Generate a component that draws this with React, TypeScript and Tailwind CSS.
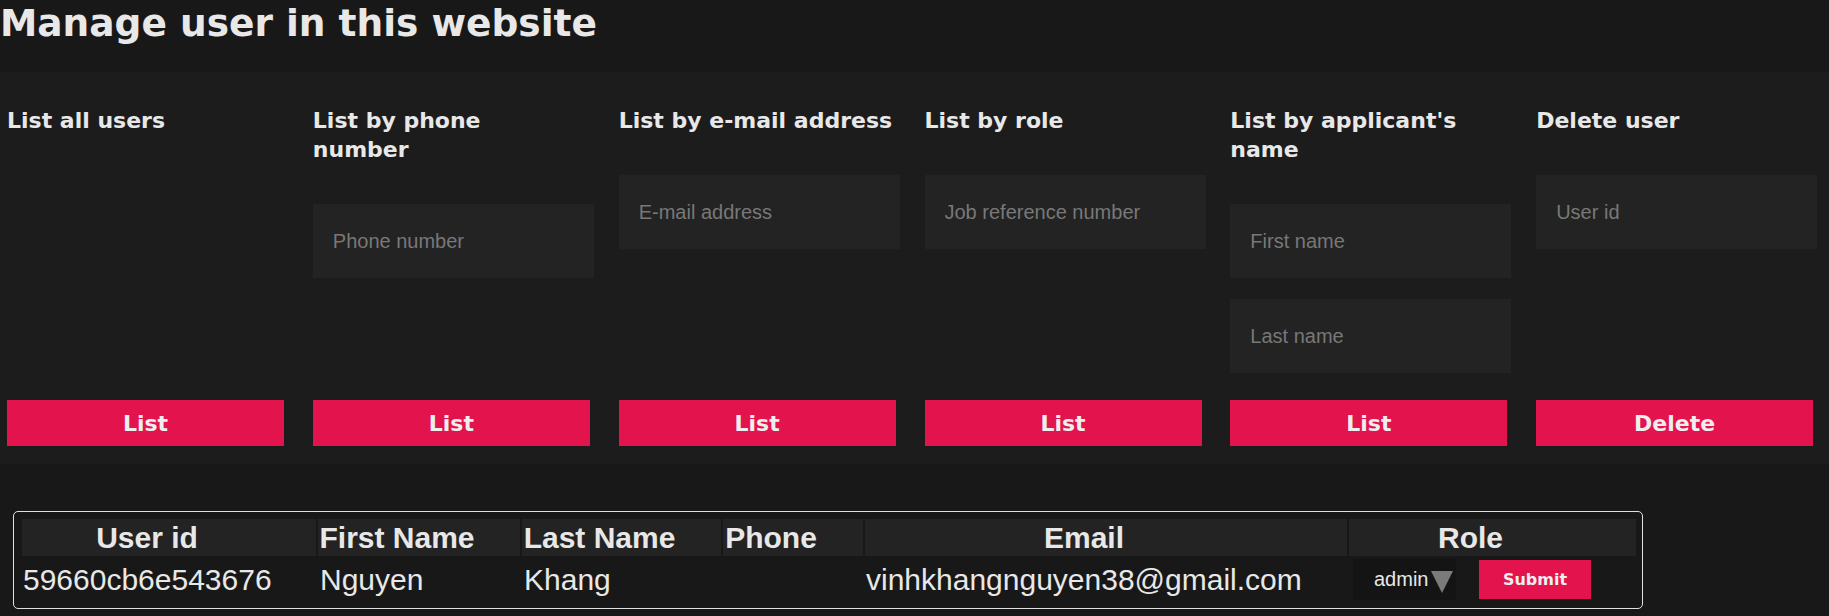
import React from 'react';

type Panel = {
  title: React.ReactNode;
  fields: string[];
  action: string;
};

const panels: Panel[] = [
  { title: 'List all users', fields: [], action: 'List' },
  { title: <>List by phone<br />number</>, fields: ['Phone number'], action: 'List' },
  { title: 'List by e-mail address', fields: ['E-mail address'], action: 'List' },
  { title: 'List by role', fields: ['Job reference number'], action: 'List' },
  { title: <>List by applicant's<br />name</>, fields: ['First name', 'Last name'], action: 'List' },
  { title: 'Delete user', fields: ['User id'], action: 'Delete' },
];

const columns = ['User id', 'First Name', 'Last Name', 'Phone', 'Email', 'Role'];

const user = {
  id: '59660cb6e543676',
  firstName: 'Nguyen',
  lastName: 'Khang',
  phone: '',
  email: 'vinhkhangnguyen38@gmail.com',
  role: 'admin',
};

function ActionPanel({ panel }: { panel: Panel }) {
  return (
    <div className="flex flex-col pl-[7px]">
      <h2 className="font-['DejaVu_Sans',sans-serif] text-[22px] font-bold leading-[29px] text-[#e8e8e8]">
        {panel.title}
      </h2>
      {panel.fields.length > 0 && (
        <div className="mt-[40px] mb-[27px] flex flex-col gap-[21px]">
          {panel.fields.map((f) => (
            <input
              key={f}
              placeholder={f}
              className="h-[74px] w-[281px] bg-[#232323] pl-[20px] font-['Liberation_Sans',Arial,sans-serif] text-[20px] text-[#e8e8e8] outline-none placeholder:text-[#787878]"
            />
          ))}
        </div>
      )}
      <button className="mt-auto h-[46px] w-[277px] bg-[#e2134d] font-['DejaVu_Sans',sans-serif] text-[22px] font-bold text-[#eeeeee]">
        {panel.action}
      </button>
    </div>
  );
}

export default function App() {
  const grid = 'grid grid-cols-[294px_202px_199px_140px_482px_287px] gap-x-[2px]';

  return (
    <div className="min-h-screen w-full overflow-hidden bg-[#181818] text-[#e8e8e8]">
      <h1 className="pt-px font-['DejaVu_Sans',sans-serif] text-[37.5px] font-bold leading-[45px] text-[#e8e8e8]">
        Manage user in this website
      </h1>

      <section className="mt-[26px] grid w-[1835px] grid-cols-6 bg-[#1c1c1c] pt-[34px] pb-[18px]">
        {panels.map((p, i) => (
          <ActionPanel key={i} panel={p} />
        ))}
      </section>

      <div className="mt-[47px] ml-[13px] w-[1630px] rounded-[5px] border border-[#e0e0e0] pt-[7px] pr-[6px] pb-[7px] pl-[8px] font-['Liberation_Sans',Arial,sans-serif]">
        <div className={grid}>
          {columns.map((c) => (
            <div key={c} className="h-[37px] bg-[#232323] pr-[44px] text-center text-[30px] font-bold leading-[37px] text-[#e8e8e8]">
              {c}
            </div>
          ))}
        </div>
        <div className={`${grid} mt-[2px] h-[43px] items-center text-[30px] leading-[34px]`}>
          <div className="px-[1px]">{user.id}</div>
          <div className="px-[2px]">{user.firstName}</div>
          <div className="px-[2px]">{user.lastName}</div>
          <div className="px-[1px]">{user.phone}</div>
          <div className="px-[1px]">{user.email}</div>
          <div className="flex items-center pl-[4px]">
            <div className="flex h-[41px] w-[103px] items-center bg-[#141414] pl-[21px]">
              <span className="text-[20px] leading-[23px]">{user.role}</span>
              <svg width="22" height="22" viewBox="0 0 22 22" className="ml-[3px] mt-[5px]">
                <polygon points="0,0 22,0 11,22" fill="#7b7b7b" />
              </svg>
            </div>
            <button className="ml-[23px] h-[39px] w-[112px] bg-[#e2134d] font-['DejaVu_Sans',sans-serif] text-[16px] font-bold text-[#eeeeee]">
              Submit
            </button>
          </div>
        </div>
      </div>
    </div>
  );
}
